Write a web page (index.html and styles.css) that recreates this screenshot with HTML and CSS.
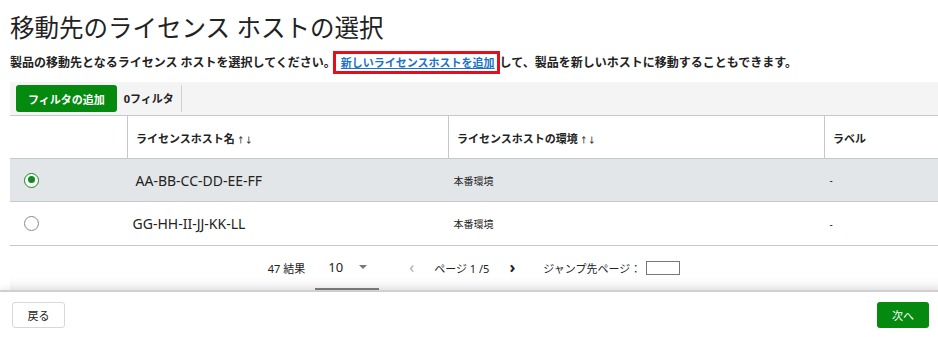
FILE: index.html
```html
<!DOCTYPE html>
<html lang="ja">
<head>
    <meta charset="UTF-8">
    <meta name="viewport" content="width=device-width, initial-scale=1.0">
    <title>移動先のライセンス ホストの選択</title>
    <link rel="stylesheet" href="styles.css">
</head>
<body>
    <div class="page">
        <h1 class="title">移動先のライセンス ホストの選択</h1>
        <p class="intro">製品の移動先となるライセンス ホストを選択してください。<a href="#" class="add-link">新しいライセンスホストを追加</a>して、製品を新しいホストに移動することもできます。</p>

        <div class="toolbar">
            <button type="button" class="btn-green filter-btn">フィルタの追加</button>
            <span class="filter-count">0フィルタ</span>
        </div>

        <table class="hosts">
            <thead>
                <tr>
                    <th class="col-select"></th>
                    <th class="col-name">ライセンスホスト名<span class="sort">↑↓</span></th>
                    <th class="col-env">ライセンスホストの環境<span class="sort">↑↓</span></th>
                    <th class="col-label">ラベル</th>
                </tr>
            </thead>
            <tbody>
                <tr class="selected">
                    <td class="col-select"><span class="radio checked"></span></td>
                    <td class="host-name">AA-BB-CC-DD-EE-FF</td>
                    <td class="small">本番環境</td>
                    <td class="small">-</td>
                </tr>
                <tr>
                    <td class="col-select"><span class="radio"></span></td>
                    <td class="host-name second">GG-HH-II-JJ-KK-LL</td>
                    <td class="small">本番環境</td>
                    <td class="small">-</td>
                </tr>
            </tbody>
        </table>

        <div class="pager">
            <span class="results">47 結果</span>
            <span class="per-page">10 <span class="caret"></span></span>
            <span class="nav prev">‹</span>
            <span class="page-info">ページ 1 /5</span>
            <span class="nav next">›</span>
            <span class="jump">ジャンプ先ページ：</span>
            <input type="text" class="jump-input">
        </div>
    </div>

    <div class="footer">
        <button type="button" class="back-btn">戻る</button>
        <button type="button" class="btn-green next-btn">次へ</button>
    </div>
</body>
</html>
```

FILE: styles.css
```css
body {
    margin: 0;
    font-family: "Noto Sans", "Noto Sans CJK JP", sans-serif;
    color: #222;
    background-color: white;
    overflow: hidden;
}
.page {
    padding-left: 10px;
}
.title {
    margin: 12px 0 0 0;
    font-size: 24.5px;
    font-weight: normal;
    line-height: 32px;
    color: #222;
}
.intro {
    margin: 7px 0 0 0;
    font-size: 12px;
    font-weight: bold;
    line-height: 23px;
    height: 23px;
    color: #222;
}
.add-link {
    display: inline-block;
    box-sizing: border-box;
    height: 23px;
    margin-left: -3px;
    padding: 0 2px 0 5px;
    border: 3px solid #e3101c;
    font-size: 11px;
    line-height: 17px;
    color: #1a73c8;
    vertical-align: top;
}
.toolbar {
    display: flex;
    align-items: center;
    margin-top: 8px;
    height: 34px;
    background-color: #f4f4f4;
    border-bottom: 1px solid #c5c9cd;
    box-sizing: border-box;
}
.btn-green {
    background-color: #058a0f;
    color: white;
    border: none;
    border-radius: 3px;
    font-family: inherit;
    font-weight: bold;
    cursor: pointer;
}
.filter-btn {
    margin-left: 6px;
    height: 27px;
    padding: 0 12px;
    font-size: 11px;
}
.filter-count {
    margin-left: 7px;
    padding-right: 7px;
    height: 27px;
    line-height: 27px;
    font-size: 11px;
    font-weight: bold;
    border-right: 1px solid #cfd2d5;
}
.hosts {
    width: 928px;
    table-layout: fixed;
    border-collapse: collapse;
}
.hosts th {
    height: 40px;
    padding: 2px 8px 0 8px;
    text-align: left;
    font-size: 11px;
    font-weight: bold;
    border-bottom: 1px solid #c5c9cd;
    border-left: 1px solid #c5c9cd;
}
.hosts th:first-child {
    border-left: none;
}
.sort {
    font-size: 8px;
    margin-left: 2px;
    color: #444;
}
.hosts th.col-select {
    width: 117px;
    padding: 0;
}
.col-name {
    width: 304px;
}
.col-env {
    width: 359px;
}
.hosts td {
    padding: 0 8px 0 5px;
    border-bottom: 1px solid #c5c9cd;
}
.hosts tbody tr {
    height: 43px;
}
.hosts tbody tr + tr {
    height: 44px;
}
.hosts tr.selected td {
    background-color: #e3e6e9;
}
.hosts td.col-select {
    padding-left: 14px;
}
.hosts td.host-name {
    font-size: 14px;
    padding-left: 8px;
}
.hosts td.host-name.second {
    padding-left: 5px;
}
.small {
    font-size: 10px;
}
.radio {
    display: block;
    box-sizing: border-box;
    width: 15px;
    height: 15px;
    border: 1px solid #8a8a8a;
    border-radius: 50%;
    background-color: white;
}
.radio.checked {
    border: 1.5px solid #0f8a1e;
    position: relative;
}
.radio.checked::after {
    content: "";
    position: absolute;
    left: 2.5px;
    top: 2.5px;
    width: 7px;
    height: 7px;
    border-radius: 50%;
    background-color: #0f8a1e;
}
.pager {
    display: flex;
    align-items: center;
    justify-content: center;
    height: 44px;
    font-size: 11px;
    color: #222;
    background: linear-gradient(to bottom, white 70%, #f2f2f2);
}
.results {
    margin-right: 10px;
}
.per-page {
    display: inline-flex;
    align-items: center;
    box-sizing: border-box;
    width: 64px;
    height: 44px;
    padding: 0 0 0 13px;
    font-size: 13px;
    border-bottom: 2px solid #777;
}
.caret {
    margin-left: 16px;
    width: 0;
    height: 0;
    border-left: 4px solid transparent;
    border-right: 4px solid transparent;
    border-top: 4px solid #777;
}
.nav {
    font-size: 16px;
    line-height: 16px;
    margin-bottom: 3px;
}
.prev {
    margin-left: 30px;
    color: #aaa;
}
.page-info {
    margin-left: 20px;
    margin-right: 20px;
}
.next {
    color: #222;
    font-weight: bold;
}
.jump {
    margin-left: 28px;
}
.jump-input {
    margin-left: 5px;
    width: 34px;
    height: 14px;
    box-sizing: border-box;
    border: 1px solid #777;
    padding: 0;
}
.footer {
    display: flex;
    justify-content: space-between;
    align-items: center;
    height: 45px;
    padding: 0 9px 0 12px;
    border-top: 2px solid #d0d0d0;
    box-shadow: 0 -3px 5px rgba(0,0,0,0.06);
    background-color: white;
}
.back-btn {
    width: 53px;
    height: 26px;
    background-color: white;
    border: 1px solid #d8d8d8;
    border-radius: 3px;
    font-family: inherit;
    font-size: 11px;
    color: #222;
    cursor: pointer;
}
.next-btn {
    width: 52px;
    height: 26px;
    font-size: 11px;
    font-weight: normal;
}
```
